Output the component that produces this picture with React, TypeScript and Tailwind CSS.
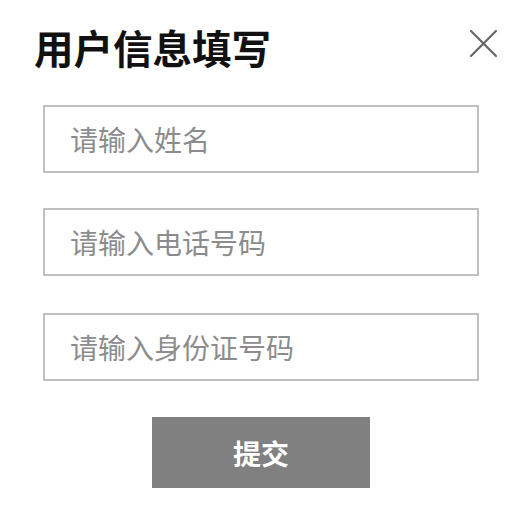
import React from "react";

const font = { fontFamily: '"Noto Sans CJK SC", "Noto Sans", sans-serif' };

export default function App() {
  return (
    <div className="w-[518px] h-[515px] bg-white overflow-hidden" style={font}>
      <div className="flex items-start justify-between pl-[34px] pr-[21px] pt-[22px] h-[105px]">
        <h1 className="text-[39.5px] leading-[50px] font-bold text-[#111]">用户信息填写</h1>
        <button className="w-[27px] h-[27px] mt-[8px] text-[#666]" aria-label="关闭">
          <svg viewBox="0 0 27 27" width="27" height="27" fill="none" stroke="currentColor" strokeWidth="2.2" strokeLinecap="round">
            <path d="M1 1 L26 26 M26 1 L1 26" />
          </svg>
        </button>
      </div>
      <div className="flex flex-col pl-[43px]">
        <input
          className="w-[436px] h-[68px] border-2 border-[#c0c0c0] pl-[25px] text-[28px] outline-none placeholder:text-[#8c8c8c]"
          placeholder="请输入姓名"
        />
        <input
          className="w-[436px] h-[68px] mt-[35px] border-2 border-[#c0c0c0] pl-[25px] text-[28px] outline-none placeholder:text-[#8c8c8c]"
          placeholder="请输入电话号码"
        />
        <input
          className="w-[436px] h-[68px] mt-[37px] border-2 border-[#c0c0c0] pl-[25px] text-[28px] outline-none placeholder:text-[#8c8c8c]"
          placeholder="请输入身份证号码"
        />
        <button className="ml-[109px] mt-[36px] w-[218px] h-[71px] bg-[#808080] text-white text-[28px] font-bold">
          提交
        </button>
      </div>
    </div>
  );
}
